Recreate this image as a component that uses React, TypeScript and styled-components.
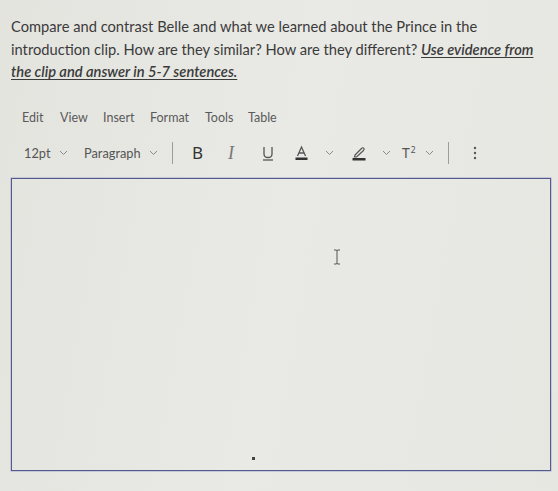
import React from "react";
import styled, { createGlobalStyle } from "styled-components";

const Global = createGlobalStyle`
  html, body { margin: 0; padding: 0; }
  body {
    width: 558px;
    height: 491px;
    overflow: hidden;
    background: #e7e7e3;
    font-family: Lato, "Open Sans", sans-serif;
  }
`;

const Page = styled.div`
  width: 558px;
  height: 491px;
  box-sizing: border-box;
  padding: 15px 8px 0 11px;
  display: flex;
  flex-direction: column;
  background: linear-gradient(100deg, #e4e4df 0%, #e9e9e5 50%, #e7e7e2 100%);
`;

const Prompt = styled.p`
  margin: 0;
  font-size: 14.7px;
  line-height: 22.5px;
  color: #3b3b3b;
  white-space: nowrap;
`;

const Emph = styled.span`
  font-weight: 600;
  font-style: italic;
  text-decoration: underline;
  text-decoration-thickness: 1px;
  text-underline-offset: 2px;
`;

const MenuBar = styled.div`
  display: flex;
  margin-top: 25px;
  padding-left: 11px;
  height: 20px;
  align-items: center;
`;

const MenuItem = styled.span<{ $w: number }>`
  width: ${(p) => p.$w}px;
  font-size: 12.5px;
  color: #5a5a5a;
`;

const Toolbar = styled.div`
  display: flex;
  align-items: center;
  margin-top: 12px;
  padding-left: 13px;
  height: 26px;
`;

const Select = styled.span<{ $w: number }>`
  display: flex;
  align-items: center;
  width: ${(p) => p.$w}px;
  font-size: 12.8px;
  color: #555;
  gap: 8px;
`;

const Chevron = styled.svg`
  width: 9px;
  height: 6px;
  flex: none;
`;

const Divider = styled.span<{ $mr: number }>`
  width: 1px;
  height: 22px;
  background: #9c9c9c;
  margin-right: ${(p) => p.$mr}px;
`;

const Tool = styled.span<{ $w: number }>`
  display: flex;
  align-items: center;
  width: ${(p) => p.$w}px;
  color: #3e3e3e;
`;

const Gap = styled.span<{ $w: number }>`
  width: ${(p) => p.$w}px;
  flex: none;
`;

const Letter = styled.span<{ $italic?: boolean; $serif?: boolean }>`
  font-family: ${(p) => (p.$serif ? '"Liberation Serif", serif' : '"Noto Sans", sans-serif')};
  font-style: ${(p) => (p.$italic ? "italic" : "normal")};
  font-size: ${(p) => (p.$serif ? "18px" : "17px")};
  line-height: 1;
  color: ${(p) => (p.$serif ? "#777" : "#333")};
`;

const Sup = styled.span`
  display: flex;
  align-items: flex-start;
  font-family: "Noto Sans", sans-serif;
  color: #555;
  height: 16px;
`;

const SupT = styled.span`
  font-size: 14px;
  line-height: 16px;
`;

const SupTwo = styled.span`
  font-size: 8.5px;
  line-height: 9px;
  margin-left: 1px;
`;

const Editor = styled.div`
  position: relative;
  margin-top: 12px;
  height: 293px;
  width: 540px;
  box-sizing: border-box;
  border: 1.5px solid #555a8a;
  box-shadow: 0 0 0 0.5px #a4a8d0;
`;

const Cursor = styled.svg`
  position: absolute;
  left: 321px;
  top: 70px;
  width: 8px;
  height: 16px;
`;

const Handle = styled.span`
  position: absolute;
  left: 240px;
  bottom: 10px;
  width: 3px;
  height: 3px;
  background: #444;
`;

const Down = () => (
  <Chevron viewBox="0 0 9 6">
    <path d="M1 1 L4.5 4.5 L8 1" fill="none" stroke="#8a8a8a" strokeWidth="1" />
  </Chevron>
);

export default function App() {
  return (
    <>
      <Global />
      <Page>
        <Prompt>
          Compare and contrast Belle and what we learned about the Prince in the
          <br />
          introduction clip. How are they similar? How are they different? <Emph>Use evidence from</Emph>
          <br />
          <Emph>the clip and answer in 5-7 sentences.</Emph>
        </Prompt>
        <MenuBar>
          <MenuItem $w={38}>Edit</MenuItem>
          <MenuItem $w={43}>View</MenuItem>
          <MenuItem $w={47}>Insert</MenuItem>
          <MenuItem $w={55}>Format</MenuItem>
          <MenuItem $w={43}>Tools</MenuItem>
          <MenuItem $w={40}>Table</MenuItem>
        </MenuBar>
        <Toolbar>
          <Select $w={60}>
            12pt <Down />
          </Select>
          <Select $w={88}>
            Paragraph <Down />
          </Select>
          <Divider $mr={19} />
          <Tool $w={36}>
            <Letter>B</Letter>
          </Tool>
          <Tool $w={34}>
            <Letter $italic $serif>I</Letter>
          </Tool>
          <Tool $w={33}>
            <svg width="12" height="16" viewBox="0 0 12 16">
              <path d="M2 2 V9 Q2 12.5 6 12.5 Q10 12.5 10 9 V2" fill="none" stroke="#555" strokeWidth="1.3" />
              <path d="M1 15 H11" stroke="#555" strokeWidth="1.3" />
            </svg>
          </Tool>
          <Tool $w={57}>
            <svg width="13" height="16" viewBox="0 0 13 16">
              <path d="M2.5 11 L6.5 2 L10.5 11 M4 8 H9" fill="none" stroke="#555" strokeWidth="1.3" />
              <rect x="0.5" y="12.5" width="12" height="2.5" fill="#333" />
            </svg>
            <Gap $w={17} />
            <Down />
          </Tool>
          <Tool $w={50}>
            <svg width="14" height="16" viewBox="0 0 14 16">
              <path d="M3 10 L9.5 3.5 Q11 2 12 3.5 Q12.5 4.5 11 6 L4.5 12 L2.5 12 Z" fill="none" stroke="#555" strokeWidth="1.2" />
              <rect x="0.5" y="13" width="13" height="2.5" fill="#333" />
            </svg>
            <Gap $w={16} />
            <Down />
          </Tool>
          <Tool $w={46}>
            <Sup>
              <SupT>T</SupT>
              <SupTwo>2</SupTwo>
            </Sup>
            <Gap $w={9} />
            <Down />
          </Tool>
          <Divider $mr={24} />
          <Tool $w={10}>
            <svg width="4" height="16" viewBox="0 0 4 16">
              <circle cx="2" cy="3" r="1.2" fill="#555" />
              <circle cx="2" cy="8" r="1.2" fill="#555" />
              <circle cx="2" cy="13" r="1.2" fill="#555" />
            </svg>
          </Tool>
        </Toolbar>
        <Editor>
          <Cursor viewBox="0 0 8 16">
            <path d="M1 1 H3 Q4 1 4 2 Q4 1 5 1 H7 M4 2 V14 M1 15 H3 Q4 15 4 14 Q4 15 5 15 H7" fill="none" stroke="#555" strokeWidth="1" />
          </Cursor>
          <Handle />
        </Editor>
      </Page>
    </>
  );
}
